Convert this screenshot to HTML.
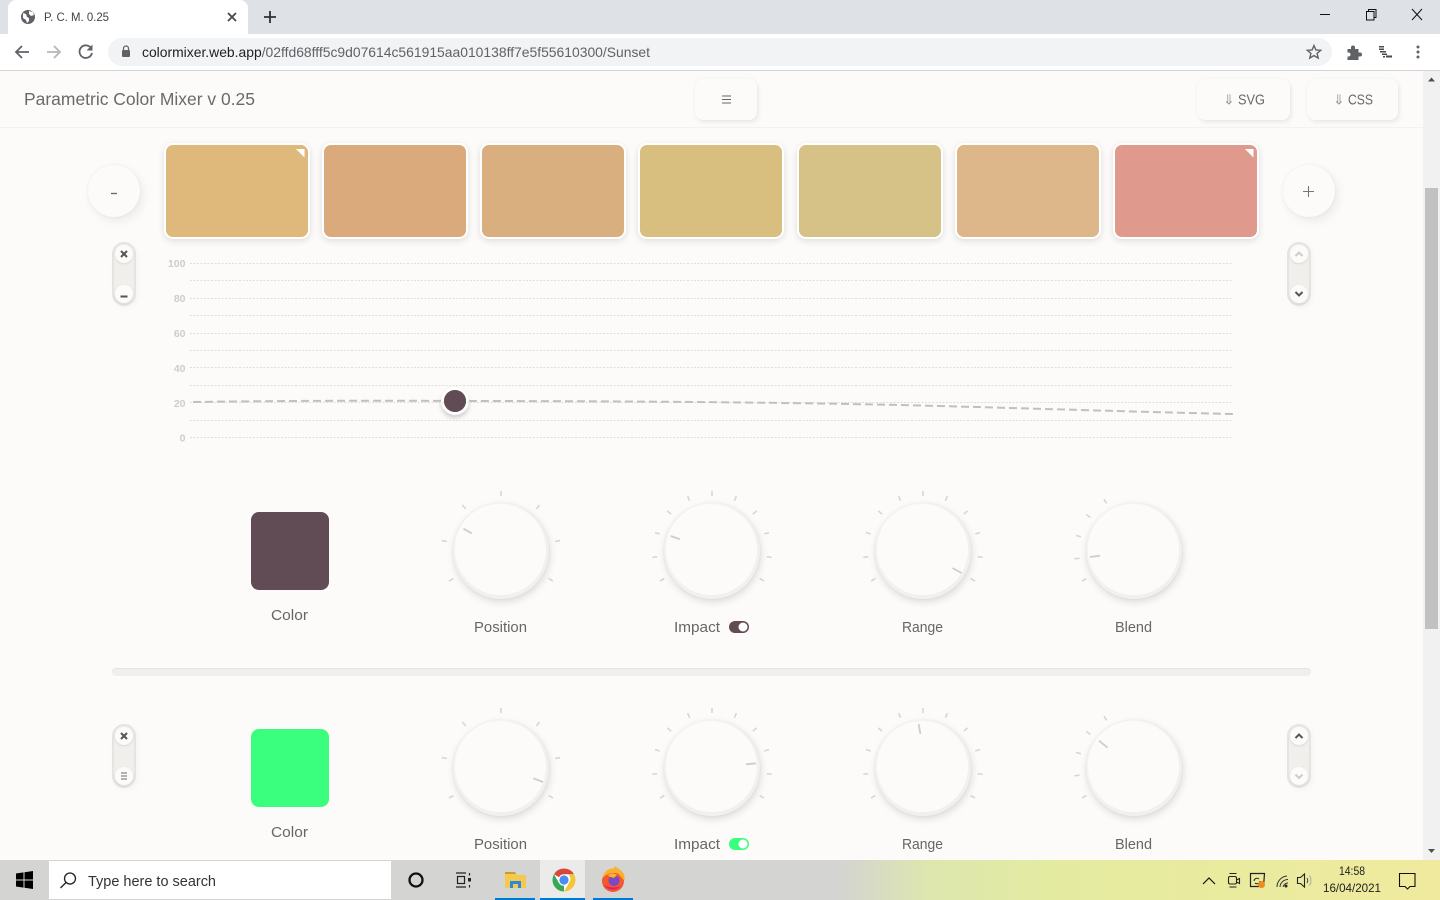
<!DOCTYPE html>
<html><head><meta charset="utf-8"><title>P. C. M. 0.25</title>
<style>
html,body{margin:0;padding:0;width:1440px;height:900px;overflow:hidden;background:#fcfbf9}
div{position:absolute;box-sizing:border-box}
.sw{top:143px;width:146px;height:96px;border:2px solid #fff;border-radius:9px;box-shadow:0 2px 7px rgba(0,0,0,.12)}
.btn{background:#fcfbf9;border-radius:8px;box-shadow:2px 3px 5px rgba(0,0,0,.06),0 0 3px rgba(0,0,0,.05)}
.rnd{top:165px;width:52px;height:52px;border-radius:50%;background:#fcfbf9;box-shadow:3px 4px 10px rgba(0,0,0,.07),0 0 3px rgba(0,0,0,.05)}
.pill{width:24px;height:64px;border-radius:12px;background:#f1efec;box-shadow:inset 0 0 0 2px #e6e4e2,2px 2px 6px rgba(0,0,0,.03)}
.pb{left:3px;width:18px;height:18px;border-radius:50%;background:#fcfbf9;box-shadow:0 1px 2px rgba(0,0,0,.1)}
.knob{width:96px;height:96px;border-radius:50%;background:#f1f0ef;box-shadow:1px 3px 8px rgba(0,0,0,.13),0 0 2px rgba(0,0,0,.06)}
.knob div{left:2.5px;top:2px;width:90px;height:90px;border-radius:50%;background:#fcfbfa;box-shadow:-1px -1px 2px #fff}
.c{width:78px;height:78px;border-radius:8px;left:251px}
svg{position:absolute;left:0;top:0}
text{font-family:"Liberation Sans",sans-serif}
</style></head><body>
<div style="left:0;top:0;width:1440px;height:34px;background:#dee1e6"></div>
<div style="left:8px;top:0;width:240px;height:35px;background:#fff;border-radius:8px 8px 0 0"></div>
<div style="left:0;top:34px;width:1440px;height:37px;background:#fff;border-bottom:1px solid #d2d4d6"></div>
<div style="left:108px;top:38px;width:1224px;height:28px;background:#f1f3f4;border-radius:14px"></div>
<div style="left:0;top:71px;width:1423px;height:57px;background:#fcfbf9;border-bottom:1px solid #f3f2f0"></div>
<div class="btn" style="left:695px;top:79px;width:62px;height:41px"></div>
<div class="btn" style="left:1197px;top:79px;width:93px;height:41px"></div>
<div class="btn" style="left:1307px;top:79px;width:91px;height:41px"></div>
<div style="left:1423px;top:71px;width:17px;height:789px;background:#f1f1f1"></div>
<div style="left:1425px;top:188px;width:13px;height:441px;background:#c1c1c1"></div>

<div class="rnd" style="left:88px"></div><div class="rnd" style="left:1283px"></div>
<div class="sw" style="left:164px;background:#dfb97c"></div>
<div class="sw" style="left:322px;background:#dbaa7c"></div>
<div class="sw" style="left:480px;background:#d9af7f"></div>
<div class="sw" style="left:638px;background:#d8bf80"></div>
<div class="sw" style="left:797px;background:#d6c187"></div>
<div class="sw" style="left:955px;background:#ddb68a"></div>
<div class="sw" style="left:1113px;background:#e09a8d"></div>

<div class="pill" style="left:112px;top:242px"><div class="pb" style="top:3px"></div><div class="pb" style="top:43px"></div></div>
<div class="pill" style="left:1287px;top:242px"><div class="pb" style="top:3px"></div><div class="pb" style="top:43px"></div></div>
<div class="pill" style="left:112px;top:724px"><div class="pb" style="top:3px"></div><div class="pb" style="top:43px"></div></div>
<div class="pill" style="left:1287px;top:724px"><div class="pb" style="top:3px"></div><div class="pb" style="top:43px"></div></div>

<div class="c" style="top:512px;background:#614b54"></div>
<div class="c" style="top:729px;background:#3aff7e"></div>
<div class="knob" style="left:453px;top:503px"><div></div></div>
<div class="knob" style="left:664px;top:503px"><div></div></div>
<div class="knob" style="left:875px;top:503px"><div></div></div>
<div class="knob" style="left:1086px;top:503px"><div></div></div>
<div class="knob" style="left:453px;top:720px"><div></div></div>
<div class="knob" style="left:664px;top:720px"><div></div></div>
<div class="knob" style="left:875px;top:720px"><div></div></div>
<div class="knob" style="left:1086px;top:720px"><div></div></div>
<div style="left:112px;top:668px;width:1199px;height:8px;border-radius:4px;background:#f1eeeb;border-top:1px solid #e5e2df"></div>
<div style="left:444px;top:390px;width:22px;height:22px;border-radius:50%;background:#614b54;box-shadow:0 0 0 3px #fff,0 3px 5px 3px rgba(0,0,0,.18)"></div>
<div style="left:729px;top:621px;width:20px;height:12px;border-radius:6px;background:#614b54"></div>
<div style="left:729px;top:838px;width:20px;height:12px;border-radius:6px;background:#3aff7e"></div>

<div style="left:0;top:860px;width:1440px;height:40px;background:linear-gradient(90deg,#d4d4d2 0,#d4d4d2 840px,#dde7ae 930px,#e4eba0 1060px,#eaeb9f 1250px,#f0ea9e 1440px)"></div>
<div style="left:49px;top:861px;width:342px;height:38px;background:#fff"></div>
<div style="left:540px;top:860px;width:45px;height:40px;background:#ebebe9"></div>
<div style="left:495px;top:898px;width:40px;height:2px;background:#0078d7"></div>
<div style="left:540px;top:898px;width:45px;height:2px;background:#0078d7"></div>
<div style="left:593px;top:898px;width:40px;height:2px;background:#0078d7"></div>

<svg width="1440" height="900" viewBox="0 0 1440 900">
<defs>
<g id="t" stroke="#d8d6d4" stroke-width="1.6" fill="none"><line x1="0" y1="-55" x2="0" y2="-60"/></g>
<g id="t7"><use href="#t" transform="rotate(-120)"/><use href="#t" transform="rotate(-80)"/><use href="#t" transform="rotate(-40)"/><use href="#t"/><use href="#t" transform="rotate(40)"/><use href="#t" transform="rotate(80)"/><use href="#t" transform="rotate(120)"/></g>
<g id="t11"><use href="#t" transform="rotate(-120)"/><use href="#t" transform="rotate(-96)"/><use href="#t" transform="rotate(-72)"/><use href="#t" transform="rotate(-48)"/><use href="#t" transform="rotate(-24)"/><use href="#t"/><use href="#t" transform="rotate(24)"/><use href="#t" transform="rotate(48)"/><use href="#t" transform="rotate(72)"/><use href="#t" transform="rotate(96)"/><use href="#t" transform="rotate(120)"/></g>
<g id="t5"><use href="#t" transform="rotate(-120)"/><use href="#t" transform="rotate(-97.5)"/><use href="#t" transform="rotate(-75)"/><use href="#t" transform="rotate(-52.5)"/><use href="#t" transform="rotate(-30)"/></g>
</defs>

<!-- chrome -->
<circle cx="28" cy="17" r="7" fill="#5f6368"/><path d="M23 13l3 1 1 3 2 1v3l-2 2-1-3-3-2zM29 11l4 1 1 3-3 1-2-2z" fill="#fff"/>
<text x="44" y="21" font-size="12" fill="#444" textLength="65" lengthAdjust="spacingAndGlyphs">P. C. M. 0.25</text>
<path d="M228 13l8 8M236 13l-8 8" stroke="#45474a" stroke-width="1.8"/>
<path d="M270 11v12M264 17h12" stroke="#303134" stroke-width="1.8"/>
<path d="M29 52H16M22 46l-6 6 6 6" stroke="#5f6368" stroke-width="1.8" fill="none"/>
<path d="M47 52h13M54 46l6 6-6 6" stroke="#b5b7ba" stroke-width="1.8" fill="none"/>
<path d="M91 48a6.3 6.3 0 1 0 1 5" stroke="#5f6368" stroke-width="1.8" fill="none"/><path d="M92.5 44.5v6h-6z" fill="#5f6368"/>
<rect x="122" y="50" width="8" height="7" rx="1" fill="#5f6368"/><path d="M123.5 50v-1.5a2.5 2.5 0 0 1 5 0V50" stroke="#5f6368" stroke-width="1.2" fill="none"/>
<text x="142" y="57" font-size="14" fill="#202124" textLength="508" lengthAdjust="spacingAndGlyphs">colormixer.web.app<tspan fill="#5f6368">/02ffd68fff5c9d07614c561915aa010138ff7e5f55610300/Sunset</tspan></text>
<path d="M1314 45.5l1.9 4.4 4.8.4-3.6 3.1 1.1 4.7-4.2-2.5-4.2 2.5 1.1-4.7-3.6-3.1 4.8-.4z" stroke="#5f6368" stroke-width="1.4" fill="none"/>
<path d="M1347.5 49h3.5v-1.5a2 2 0 0 1 4 0V49h3.5v3.5h1.500a2 2 0 0 1 0 4h-1.500V60H1347.5v-3.500h1a2 2 0 0 0 0-4h-1z" fill="#5f6368"/>
<path d="M1379 46h5v1.500h-5zM1379 48.500h5v1.500h-5zM1380 51h6v1.500h-6zM1382 53.500h5v1.500h-5zM1386 55.500h6v2h-6zM1383 56h2v1.500h-2z" fill="#4a4a4a"/>
<circle cx="1418" cy="47" r="1.500" fill="#5f6368"/><circle cx="1418" cy="52" r="1.500" fill="#5f6368"/><circle cx="1418" cy="57" r="1.500" fill="#5f6368"/>
<path d="M1320 14.500h10" stroke="#111" stroke-width="1"/>
<path d="M1366.500 11.500h7.500v8.500h-7.500zM1368.500 11.500V9.500h7.500V17.500h-2" stroke="#111" stroke-width="1" fill="none"/>
<path d="M1412 9l10 11M1422 9l-10 11" stroke="#111" stroke-width="1"/>
<path d="M1428 81.500l3.500-4 3.500 4z" fill="#505050"/><path d="M1428 849l3.500 4 3.500-4z" fill="#505050"/>

<!-- header -->
<text x="24" y="105" font-size="17.500" fill="#6a6a6a" textLength="231" lengthAdjust="spacingAndGlyphs">Parametric Color Mixer v 0.25</text>
<path d="M722 96h9M722 99.500h9M722 103h9" stroke="#666" stroke-width="1"/>
<text x="1223" y="104.500" font-size="14" fill="#9a9a9a">⇓</text>
<text x="1238" y="104.500" font-size="15" fill="#6a6a6a" textLength="27" lengthAdjust="spacingAndGlyphs">SVG</text>
<text x="1333" y="104.500" font-size="14" fill="#9a9a9a">⇓</text>
<text x="1348" y="104.500" font-size="15" fill="#6a6a6a" textLength="25" lengthAdjust="spacingAndGlyphs">CSS</text>
<path d="M111 193.500h6" stroke="#666" stroke-width="1.300"/>
<path d="M1303 191.500h11M1308.500 186v11" stroke="#777" stroke-width="1.100"/>
<path d="M296 149h8.500v8.500z" fill="#fff"/><path d="M1245 149h8.500v8.500z" fill="#fff"/>

<!-- pill icons -->
<path d="M121 251l6 6M127 251l-6 6" stroke="#555" stroke-width="2"/>
<path d="M120.500 296.500h7" stroke="#555" stroke-width="2"/>
<path d="M1295.500 256l3.500-3.500 3.500 3.500" stroke="#ccc" stroke-width="2" fill="none"/>
<path d="M1295.500 292l3.500 3.500 3.500-3.500" stroke="#555" stroke-width="2" fill="none"/>
<path d="M121 733l6 6M127 733l-6 6" stroke="#555" stroke-width="2"/>
<path d="M121 773h6M121 776h6M121 779h6" stroke="#999" stroke-width="1.500"/>
<path d="M1295.500 738l3.500-3.500 3.500 3.500" stroke="#555" stroke-width="2" fill="none"/>
<path d="M1295.500 774.500l3.500 3.500 3.500-3.500" stroke="#ccc" stroke-width="2" fill="none"/>

<!-- chart -->
<g stroke="#dfdedc" stroke-width="1" stroke-dasharray="2 1.500" fill="none">
<path d="M190 263.500H1233M190 280.500H1233M190 298.500H1233M190 315.500H1233M190 333.500H1233M190 350.500H1233M190 367.500H1233M190 385.500H1233M190 402.500H1233M190 420.500H1233M190 437.500H1233"/>
</g>
<g font-size="10.500" font-weight="bold" fill="#d0cbc8" text-anchor="end">
<text x="185.500" y="267">100</text><text x="185.500" y="302">80</text><text x="185.500" y="337">60</text><text x="185.500" y="372">40</text><text x="185.500" y="407">20</text><text x="185.500" y="441.500">0</text>
</g>
<path d="M193 402C300 400.500 400 400.500 455 401C600 401 760 402 900 405C1020 408 1140 412 1233 414" stroke="#c2c0be" stroke-width="2" stroke-dasharray="8 4" fill="none"/>
<circle cx="455" cy="401" r="11" fill="#614b54"/>

<!-- ticks -->
<use href="#t7" transform="translate(501 551)"/>
<use href="#t11" transform="translate(712 551)"/>
<use href="#t11" transform="translate(923 551)"/>
<use href="#t5" transform="translate(1134 551)"/>
<use href="#t7" transform="translate(501 768)"/>
<use href="#t11" transform="translate(712 768)"/>
<use href="#t11" transform="translate(923 768)"/>
<use href="#t5" transform="translate(1134 768)"/>
<g stroke="#cfcdcb" stroke-width="1.800">
<line x1="463.500" y1="528.700" x2="471.700" y2="533.300"/>
<line x1="670.800" y1="536" x2="680" y2="539.300"/>
<line x1="952.500" y1="568" x2="961.400" y2="573"/>
<line x1="1090" y1="557" x2="1100" y2="555.700"/>
<line x1="533.300" y1="778.300" x2="543" y2="782"/>
<line x1="746" y1="764.300" x2="756" y2="763.300"/>
<line x1="918.700" y1="724" x2="920.400" y2="734"/>
<line x1="1099" y1="740.700" x2="1107.600" y2="747.700"/>
</g>

<!-- labels -->
<g font-size="15" fill="#666" lengthAdjust="spacingAndGlyphs">
<text x="271" y="620" textLength="37" lengthAdjust="spacingAndGlyphs">Color</text>
<text x="474" y="632" textLength="53" lengthAdjust="spacingAndGlyphs">Position</text>
<text x="674" y="632" textLength="46" lengthAdjust="spacingAndGlyphs">Impact</text>
<text x="902" y="632" textLength="41" lengthAdjust="spacingAndGlyphs">Range</text>
<text x="1115" y="632" textLength="37" lengthAdjust="spacingAndGlyphs">Blend</text>
<text x="271" y="837" textLength="37" lengthAdjust="spacingAndGlyphs">Color</text>
<text x="474" y="849" textLength="53" lengthAdjust="spacingAndGlyphs">Position</text>
<text x="674" y="849" textLength="46" lengthAdjust="spacingAndGlyphs">Impact</text>
<text x="902" y="849" textLength="41" lengthAdjust="spacingAndGlyphs">Range</text>
<text x="1115" y="849" textLength="37" lengthAdjust="spacingAndGlyphs">Blend</text>
</g>
<circle cx="743" cy="627" r="4.500" fill="#fff"/>
<circle cx="743" cy="844" r="4.500" fill="#fff"/>

<!-- taskbar -->
<path d="M16 873.500l7.500-1.100v7.100H16zM24.500 872.200l8.500-1.200v8.500h-8.500zM16 880.500h7.500v7.100L16 886.500zM24.500 880.500H33V889l-8.500-1.200z" fill="#000"/>
<circle cx="70" cy="878.500" r="5.500" stroke="#222" stroke-width="1.300" fill="none"/><path d="M66 882.500l-5.500 5.500" stroke="#222" stroke-width="1.300"/>
<text x="88" y="886" font-size="14.500" fill="#333" textLength="128" lengthAdjust="spacingAndGlyphs">Type here to search</text>
<circle cx="416" cy="880" r="6.500" stroke="#111" stroke-width="2.300" fill="none"/>
<path d="M456 873h10M456 887h10M457.500 876.500h7v7h-7z" stroke="#222" stroke-width="1.200" fill="none"/>
<path d="M469.500 873v2.500M469.500 885v2.500" stroke="#222" stroke-width="1.200"/><rect x="468" y="878" width="3" height="3.500" fill="#222"/>
<path d="M505 872h10l2 3h9v13h-21z" fill="#f5c94f"/><path d="M505 872h10l1 2h-11z" fill="#d29a2a"/><path d="M510 881h11v7h-3v-4h-5v4h-3z" fill="#2c8ad6"/>
<circle cx="564" cy="880" r="11.500" fill="#fff"/>
<path d="M554 874.300A11.500 11.500 0 0 1 574 874.300H564a5.700 5.700 0 0 0-5 2.900z" fill="#d9473a"/>
<path d="M574 874.300A11.500 11.500 0 0 1 564 891.500L569 882.800a5.700 5.700 0 0 0 -1 -8.500z" fill="#f3c53c"/>
<path d="M564 891.500A11.500 11.500 0 0 1 554 874.300L559 883a5.700 5.700 0 0 0 5 2.800z" fill="#3aa757"/>
<circle cx="564" cy="880" r="4.600" fill="#4a8cf0"/>
<circle cx="613" cy="881" r="11" fill="#f3582e"/><path d="M602.500 878c1-6 6-10 11-9.500l2-2.500c1 2 4 3 6 5 3 3 3.500 6 3 10l-6-7c-4-2-11-1-16 4z" fill="#fbb02d"/><circle cx="614" cy="880.500" r="5.500" fill="#7a4ac0"/><path d="M608 875c3-2 7-2 9 0l-3 3c-3-1-5-1-6-3z" fill="#fbb02d"/><path d="M604 885c3 5 12 7 17 1-4 2-12 2-17-1z" fill="#e8206a"/>
<path d="M1203 884l6-6 6 6" stroke="#111" stroke-width="1.200" fill="none"/>
<rect x="1228.500" y="876.500" width="8" height="7.500" rx="1.500" stroke="#222" stroke-width="1.100" fill="none"/><path d="M1236.500 880l3-1.500v5l-3-1.500M1229.500 873.500h7M1229.500 887h7" stroke="#222" stroke-width="1.100" fill="none"/>
<path d="M1250.500 873.500h14l-1 13h-13z" stroke="#222" stroke-width="1.200" fill="none"/><path d="M1254 881a3 3 0 0 1 5-2M1260 881a3 3 0 0 1-5 2" stroke="#222" stroke-width="1" fill="none"/><circle cx="1261.500" cy="884.500" r="3.500" fill="#f08c1c"/>
<path d="M1277 887a11 11 0 0 1 10-11M1280 887a8 8 0 0 1 8-7.500M1283 887a5 5 0 0 1 5-4" stroke="#333" stroke-width="1" fill="none"/><circle cx="1286" cy="886" r="1.500" fill="#222"/>
<path d="M1297.500 877.500h3l4-3.500v13l-4-3.500h-3z" stroke="#222" stroke-width="1.100" fill="none"/><path d="M1307 878a5 5 0 0 1 0 5" stroke="#444" stroke-width="1" fill="none"/><path d="M1309.500 875.500a9 9 0 0 1 0 10" stroke="#aaa" stroke-width="1" fill="none"/>
<text x="1339" y="875" font-size="12" fill="#222" textLength="26" lengthAdjust="spacingAndGlyphs">14:58</text>
<text x="1323" y="892" font-size="12" fill="#222" textLength="58" lengthAdjust="spacingAndGlyphs">16/04/2021</text>
<path d="M1399.500 873.500h15.500v13h-5l-2.500 2.500-2.500-2.500h-5.500z" stroke="#111" stroke-width="1.100" fill="none"/>
</svg>
</body></html>
